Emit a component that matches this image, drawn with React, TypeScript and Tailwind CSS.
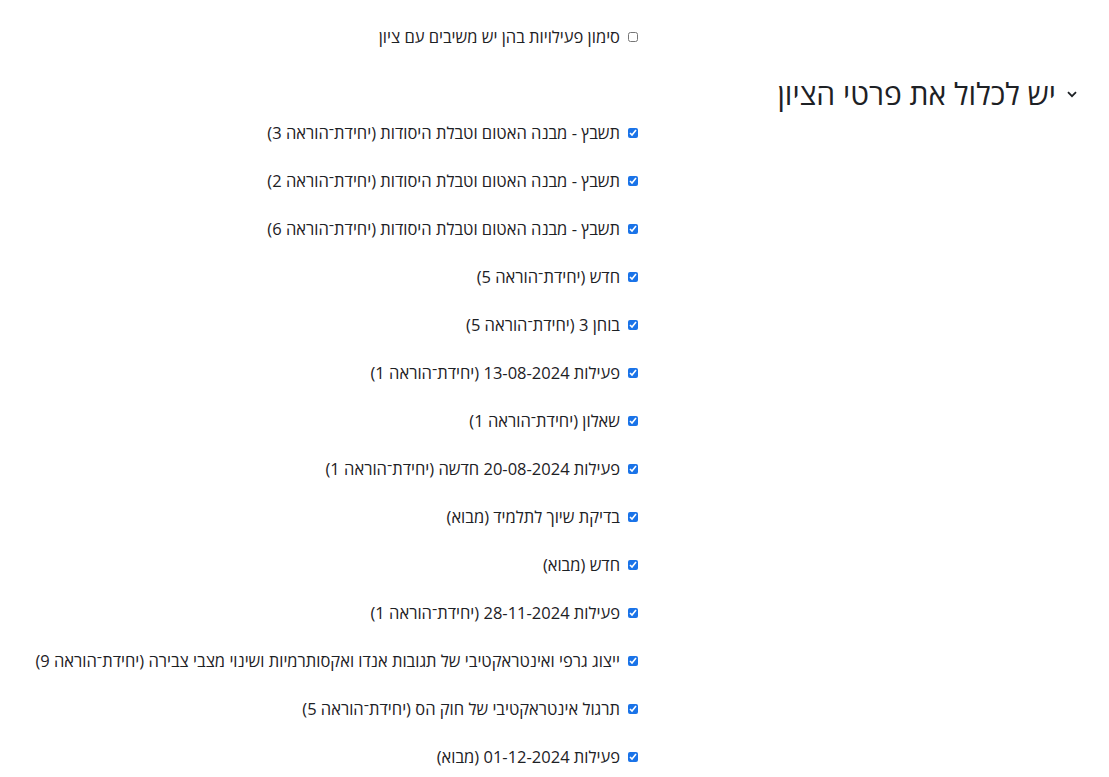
import React from "react";

const items = [
  "תשבץ - מבנה האטום וטבלת היסודות (יחידת־הוראה 3)",
  "תשבץ - מבנה האטום וטבלת היסודות (יחידת־הוראה 2)",
  "תשבץ - מבנה האטום וטבלת היסודות (יחידת־הוראה 6)",
  "חדש (יחידת־הוראה 5)",
  "בוחן 3 (יחידת־הוראה 5)",
  "פעילות 13-08-2024 (יחידת־הוראה 1)",
  "שאלון (יחידת־הוראה 1)",
  "פעילות 20-08-2024 חדשה (יחידת־הוראה 1)",
  "בדיקת שיוך לתלמיד (מבוא)",
  "חדש (מבוא)",
  "פעילות 28-11-2024 (יחידת־הוראה 1)",
  "ייצוג גרפי ואינטראקטיבי של תגובות אנדו ואקסותרמיות ושינוי מצבי צבירה (יחידת־הוראה 9)",
  "תרגול אינטראקטיבי של חוק הס (יחידת־הוראה 5)",
  "פעילות 01-12-2024 (מבוא)",
];

function Row({ label, checked }: { label: string; checked: boolean }) {
  return (
    <div className="flex items-center h-[48px]">
      <div className="w-[471px] shrink-0" />
      <label className="flex items-center gap-[8px]">
        <input
          type="checkbox"
          defaultChecked={checked}
          className="w-[10px] h-[10px] m-0 accent-[#1a73e8]"
        />
        <span className="leading-[22px] whitespace-nowrap">{label}</span>
      </label>
    </div>
  );
}

export default function App() {
  return (
    <div
      dir="rtl"
      className="w-[1109px] h-[777px] overflow-hidden bg-white text-[#1d2125] text-[16.5px] font-['Open_Sans',sans-serif]"
    >
      <div className="pt-[13px]">
        <Row label="סימון פעילויות בהן יש משיבים עם ציון" checked={false} />
      </div>
      <div className="flex items-center h-[40px] mt-[13px] pr-[32px] gap-[11px]">
        <svg width="10" height="7" viewBox="0 0 10 7" className="shrink-0">
          <path d="M1 1.2 L5 5.2 L9 1.2" fill="none" stroke="#1d2125" strokeWidth="1.8" />
        </svg>
        <h3 className="text-[30px] leading-[36px] m-0 font-normal">יש לכלול את פרטי הציון</h3>
      </div>
      <div className="mt-[-5px]">
        {items.map((t, i) => (
          <Row key={i} label={t} checked={true} />
        ))}
      </div>
    </div>
  );
}
